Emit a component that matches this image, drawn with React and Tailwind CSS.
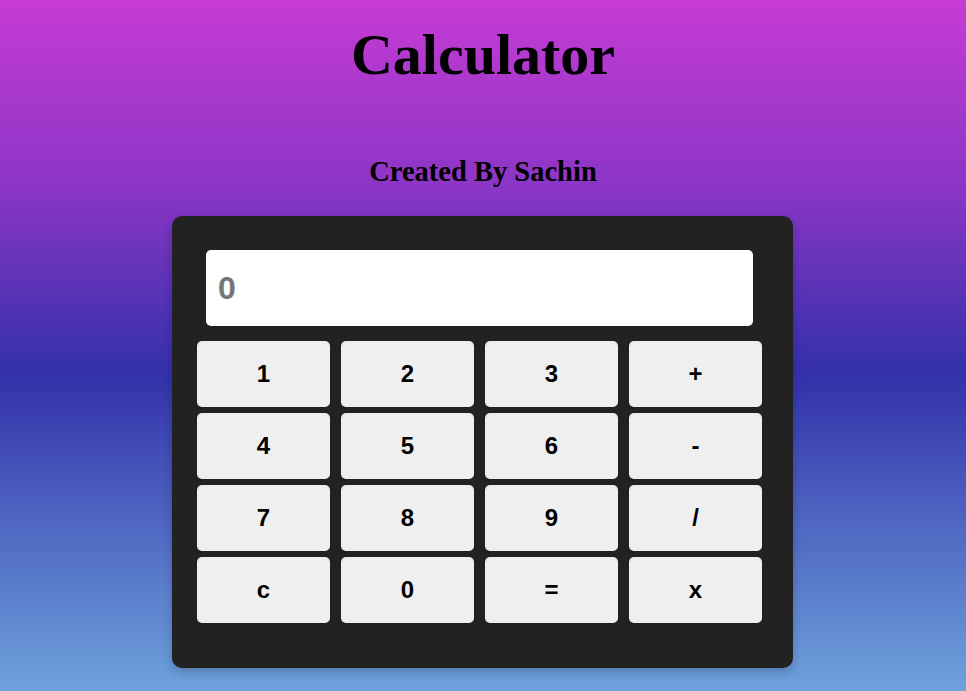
import React from "react";

const keys = ["1", "2", "3", "+", "4", "5", "6", "-", "7", "8", "9", "/", "c", "0", "=", "x"];

export default function App() {
  return (
    <div className="min-h-[691px] w-full bg-[linear-gradient(180deg,#c63bd4_0%,#8b35c6_27%,#3331aa_54%,#6ea2dc_100%)] flex flex-col items-center">
      <h1 className="pt-[26px] text-[58px] leading-none font-bold text-black [font-family:'Liberation_Serif',serif]">
        Calculator
      </h1>
      <h2 className="mt-[74px] text-[28.5px] leading-none font-bold text-black [font-family:'Liberation_Serif',serif]">
        Created By Sachin
      </h2>
      <div className="mt-[29px] mr-[1px] w-[621px] h-[452px] bg-[#222222] rounded-[10px] shadow-[0_4px_10px_rgba(0,0,0,0.2)] pt-[34px] pl-[25px] flex flex-col [font-family:'Liberation_Sans',Arial,sans-serif]">
        <div className="ml-[9px] w-[547px] h-[76px] bg-white rounded-[5px] flex items-center pl-[12px] text-[32px] font-bold text-[#757575]">
          0
        </div>
        <div className="mt-[15px] grid grid-cols-[repeat(4,133px)] grid-rows-[repeat(4,66px)] gap-x-[11px] gap-y-[6px]">
          {keys.map((k) => (
            <button
              key={k}
              className="bg-[#efefef] rounded-[5px] flex items-center justify-center text-[24px] font-bold text-black"
            >
              {k}
            </button>
          ))}
        </div>
      </div>
    </div>
  );
}
